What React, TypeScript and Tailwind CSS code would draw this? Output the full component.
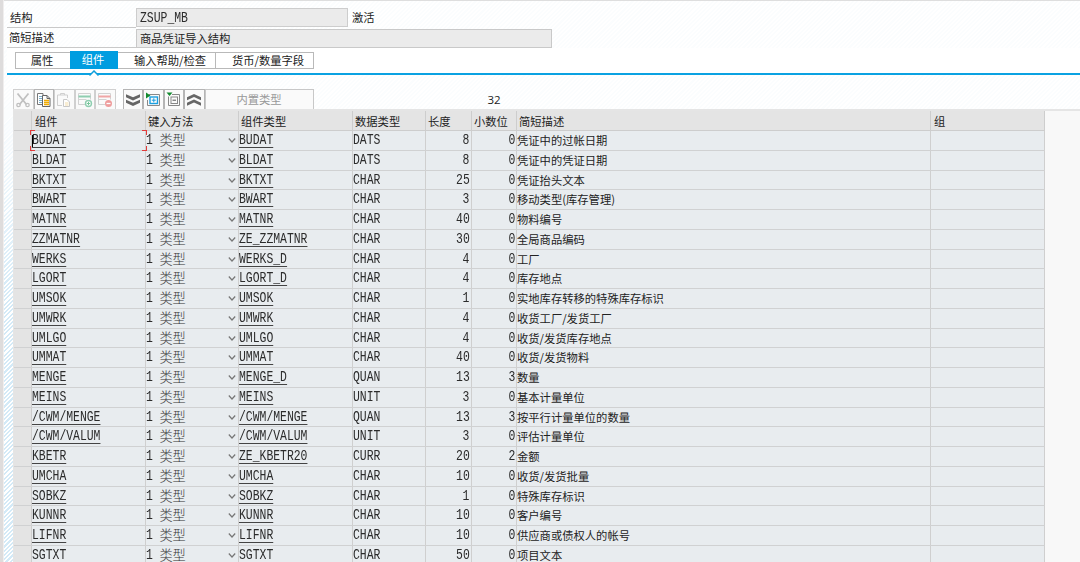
import type { ReactNode } from "react";

type Field = {
  name: string;
  type: string;
  dataType: string;
  length: number;
  decimals: number;
  text: string;
};

const fields: Field[] = [
  { name: "BUDAT", type: "BUDAT", dataType: "DATS", length: 8, decimals: 0, text: "凭证中的过帐日期" },
  { name: "BLDAT", type: "BLDAT", dataType: "DATS", length: 8, decimals: 0, text: "凭证中的凭证日期" },
  { name: "BKTXT", type: "BKTXT", dataType: "CHAR", length: 25, decimals: 0, text: "凭证抬头文本" },
  { name: "BWART", type: "BWART", dataType: "CHAR", length: 3, decimals: 0, text: "移动类型(库存管理)" },
  { name: "MATNR", type: "MATNR", dataType: "CHAR", length: 40, decimals: 0, text: "物料编号" },
  { name: "ZZMATNR", type: "ZE_ZZMATNR", dataType: "CHAR", length: 30, decimals: 0, text: "全局商品编码" },
  { name: "WERKS", type: "WERKS_D", dataType: "CHAR", length: 4, decimals: 0, text: "工厂" },
  { name: "LGORT", type: "LGORT_D", dataType: "CHAR", length: 4, decimals: 0, text: "库存地点" },
  { name: "UMSOK", type: "UMSOK", dataType: "CHAR", length: 1, decimals: 0, text: "实地库存转移的特殊库存标识" },
  { name: "UMWRK", type: "UMWRK", dataType: "CHAR", length: 4, decimals: 0, text: "收货工厂/发货工厂" },
  { name: "UMLGO", type: "UMLGO", dataType: "CHAR", length: 4, decimals: 0, text: "收货/发货库存地点" },
  { name: "UMMAT", type: "UMMAT", dataType: "CHAR", length: 40, decimals: 0, text: "收货/发货物料" },
  { name: "MENGE", type: "MENGE_D", dataType: "QUAN", length: 13, decimals: 3, text: "数量" },
  { name: "MEINS", type: "MEINS", dataType: "UNIT", length: 3, decimals: 0, text: "基本计量单位" },
  { name: "/CWM/MENGE", type: "/CWM/MENGE", dataType: "QUAN", length: 13, decimals: 3, text: "按平行计量单位的数量" },
  { name: "/CWM/VALUM", type: "/CWM/VALUM", dataType: "UNIT", length: 3, decimals: 0, text: "评估计量单位" },
  { name: "KBETR", type: "ZE_KBETR20", dataType: "CURR", length: 20, decimals: 2, text: "金额" },
  { name: "UMCHA", type: "UMCHA", dataType: "CHAR", length: 10, decimals: 0, text: "收货/发货批量" },
  { name: "SOBKZ", type: "SOBKZ", dataType: "CHAR", length: 1, decimals: 0, text: "特殊库存标识" },
  { name: "KUNNR", type: "KUNNR", dataType: "CHAR", length: 10, decimals: 0, text: "客户编号" },
  { name: "LIFNR", type: "LIFNR", dataType: "CHAR", length: 10, decimals: 0, text: "供应商或债权人的帐号" },
  { name: "SGTXT", type: "SGTXT", dataType: "CHAR", length: 50, decimals: 0, text: "项目文本" },
];

const columns = "grid grid-cols-[18px_114px_93px_114px_73px_46px_45px_414px_114px]";

// Narrow fixed-width text
function Mono({ children, right }: { children: ReactNode; right?: boolean }) {
  return (
    <span
      className={
        "inline-block scale-x-[0.815] whitespace-pre font-['Liberation_Mono',monospace] text-[14px] leading-[15px] text-[#2b2b2b] " +
        (right ? "origin-right" : "origin-left")
      }
    >
      {children}
    </span>
  );
}

function LinkText({ children }: { children: ReactNode }) {
  return (
    <Mono>
      <span className="block h-[15px] border-b border-[#444]">{children}</span>
    </Mono>
  );
}

function Head({ children, className = "" }: { children?: ReactNode; className?: string }) {
  return <div className={"border-r border-[#cdcdcd] whitespace-nowrap leading-[20px] " + className}>{children}</div>;
}

function Cell({ children, className = "" }: { children?: ReactNode; className?: string }) {
  return (
    <div className={"flex min-w-0 items-start border-r border-[#cfcfcf] whitespace-nowrap pt-[2px] " + className}>
      {children}
    </div>
  );
}

function ToolButton({ children, disabled }: { children: ReactNode; disabled?: boolean }) {
  return (
    <div
      className={
        "flex h-5 w-[20.5px] items-center justify-center border border-b-0 bg-[#fafafa] " +
        (disabled ? "border-[#d0d0d0]" : "border-[#b5b5b5]")
      }
    >
      <svg width="16" height="16" viewBox="0 0 16 16" fill="none">
        {children}
      </svg>
    </div>
  );
}

function Toolbar() {
  return (
    <div className="flex h-5 pl-[9px]">
      <ToolButton disabled>
        <path d="M2.500 1.500l9 11M13.500 1.500l-9 11" stroke="#c0c0c0" strokeWidth="1.800" />
        <circle cx="3.500" cy="13" r="1.700" stroke="#c0c0c0" strokeWidth="1.300" />
        <circle cx="12.500" cy="13" r="1.700" stroke="#c0c0c0" strokeWidth="1.300" />
      </ToolButton>
      <ToolButton>
        <path d="M1.500 1.500h5.500v11H1.500z" fill="#fff" stroke="#777" />
        <path d="M3 4.500h3M3 6.500h3M3 8.500h3M3 10.500h3" stroke="#7aaecb" />
        <path d="M6.500 3.500H11l3 3v8H6.500z" fill="#fff" stroke="#666" />
        <path d="M11 3.500v3h3" stroke="#666" />
        <path d="M8 8.500h5M8 10.500h5M8 12.500h5" stroke="#f0ab00" strokeWidth="1.300" />
      </ToolButton>
      <ToolButton disabled>
        <path d="M6 13.500H1.500V3h10v3M4.500 3V1.500h4V3" stroke="#cfcfcf" />
        <path d="M7.500 7.500H11l2.500 2.500v4.500h-6z" fill="#fff" stroke="#c8c8c8" />
        <path d="M9 11h3.500M9 13h3.500" stroke="#f3dca8" />
      </ToolButton>
      <ToolButton disabled>
        <path d="M1.500 1.500h12v6M1.500 1.500v11H8M1.500 7.500h8" stroke="#d2d2d2" />
        <path d="M1.500 4.500h12" stroke="#8fceb0" strokeWidth="2" />
        <circle cx="11.500" cy="11.500" r="3" fill="#fff" stroke="#8fceb0" strokeWidth="1.400" />
        <path d="M9.800 11.500h3.400M11.500 9.800v3.400" stroke="#79c59b" />
      </ToolButton>
      <ToolButton disabled>
        <path d="M1.500 1.500h12v6M1.500 1.500v11H8M1.500 7.500h8" stroke="#d2d2d2" />
        <path d="M1.500 4.500h12" stroke="#f0a6a6" strokeWidth="2" />
        <circle cx="11.500" cy="11.500" r="3.500" fill="#ee9c9c" />
        <path d="M9.500 11.500h4" stroke="#fff" strokeWidth="1.300" />
      </ToolButton>
      <div className="w-[7px]" />
      <ToolButton>
        <path d="M1 2.200l7 3 7-3v3L8 8.400 1 5.200zM1 7.700l7 3 7-3v3l-7 3.200-7-3.200z" fill="#666" />
      </ToolButton>
      <ToolButton>
        <path d="M4 2.500h10.500v11H2.500V8" stroke="#888" />
        <rect x="5" y="5" width="7.500" height="6.500" stroke="#1a9fe0" strokeWidth="1.400" />
        <path d="M6.800 8.200h4M8.800 6.300v4" stroke="#1a9fe0" />
        <path d="M1 0.500l4.500 3L1 6.500z" fill="#128a2e" />
      </ToolButton>
      <ToolButton>
        <path d="M6 2.500h7.500v11h-11v-9" stroke="#888" />
        <rect x="5" y="5" width="6.500" height="6.500" stroke="#888" />
        <path d="M6.500 8.200h3.500" stroke="#555" />
        <path d="M0.500 0.500h6L3.500 4z" fill="#128a2e" />
      </ToolButton>
      <ToolButton>
        <path d="M1 8.300l7-3.200 7 3.200v-3L8 2 1 5.300zM1 13.800l7-3.200 7 3.200v-3L8 7.500l-7 3.300z" fill="#666" />
      </ToolButton>
      <div className="h-5 w-[109px] border border-b-0 border-[#c8c8c8] bg-[#fafafa] text-center leading-[19px] text-[#999]">
        内置类型
      </div>
      <div className="ml-[174px] pt-[2px] font-['Open_Sans',sans-serif] text-[11.500px] leading-[18px] text-[#222]">32</div>
    </div>
  );
}

function Row({ field, active }: { field: Field; active: boolean }) {
  return (
    <div className={columns + " h-[19.75px] w-[1031px] border-b border-[#d0d1d2] bg-[#e8ecef]"}>
      <div className="border-r border-[#cdcdcd] bg-[#e4e4e4]" />
      <Cell className="relative">
        <LinkText>{field.name}</LinkText>
        {active && (
          <div className="absolute -top-px -left-[2px] h-[21px] w-[117px]">
            <span className="absolute top-0 left-0 size-[5px] border-t border-l border-[#e23b3b]" />
            <span className="absolute top-0 right-0 size-[5px] border-t border-r border-[#e23b3b]" />
            <span className="absolute bottom-0 left-0 size-[5px] border-b border-l border-[#e23b3b]" />
            <span className="absolute right-0 bottom-0 size-[5px] border-r border-b border-[#e23b3b]" />
            <span className="absolute top-[5px] left-[2px] h-3 w-px bg-black" />
          </div>
        )}
      </Cell>
      <Cell>
        <Mono>1</Mono>
        <span className="-mt-px ml-[5px] font-['Noto_Sans_CJK_SC',sans-serif] text-[13.2px] leading-[15px] font-light text-[#333]">
          类型
        </span>
        <svg className="mt-[4px] mr-[2px] ml-auto" width="8" height="7" viewBox="0 0 8 7" fill="none">
          <path d="M0.800 1.500L4 5l3.200-3.500" stroke="#777" strokeWidth="1.200" />
        </svg>
      </Cell>
      <Cell>
        <LinkText>{field.type}</LinkText>
      </Cell>
      <Cell>
        <Mono>{field.dataType}</Mono>
      </Cell>
      <Cell className="justify-end pr-[1.500px]">
        <Mono right>{field.length}</Mono>
      </Cell>
      <Cell className="justify-end pr-[0.500px]">
        <Mono right>{field.decimals}</Mono>
      </Cell>
      <Cell className="leading-[15px]">{field.text}</Cell>
      <Cell />
    </div>
  );
}

export default function App() {
  return (
    <div className="flex h-[562px] w-[1080px] overflow-hidden bg-white font-['Noto_Sans_CJK_SC',sans-serif] text-[11.3px] text-[#222]">
      <div className="w-1 shrink-0 border-r border-[#f0eeee] bg-[#dedcdc]" />
      <div className="flex min-w-0 flex-1 flex-col border-t border-[#dedede] bg-[repeating-linear-gradient(135deg,#fbfdfe_0px,#fbfdfe_1.5px,#ffffff_1.5px,#ffffff_3px)]">
        {/* Structure header */}
        <div className="mt-[7px] flex h-[20px] pl-[3px]">
          <div className="w-[129px] border-b border-[#c9c9c9] pl-[3px] leading-[19px]">结构</div>
          <div className="h-[19px] w-[212px] border border-[#cdcdcd] bg-[#ebebeb] pl-[3px]">
            <Mono>ZSUP_MB</Mono>
          </div>
          <div className="pl-[4px] leading-[19px]">激活</div>
        </div>
        <div className="flex h-[20px] pl-[3px]">
          <div className="w-[129px] border-b border-[#c9c9c9] pl-[2px] leading-[19px]">简短描述</div>
          <div className="mt-[1px] h-[19px] w-[416px] border border-[#c9c9c9] bg-[#ebebeb] pl-[3px] leading-[16px]">
            商品凭证导入结构
          </div>
        </div>

        {/* Tabs */}
        <div className="ml-[3px] h-[27px] border-b-2 border-[#0aa2e2] bg-white pt-[3px] pl-[8px]">
          <div className="flex h-[18px] items-center text-center leading-[14px]">
            <div className="h-[17px] w-[55px] border border-r-0 border-[#b9b9b9] pr-[2px]">属性</div>
            <div className="relative h-[18px] w-[48px] bg-[#009de0] pr-[2px] leading-[17px] text-white">
              组件
              <svg className="absolute top-[19px] left-[19px]" width="10" height="6" viewBox="0 0 10 6">
                <path d="M0.500 5.500L5 1l4.500 4.500" fill="#fff" stroke="#0f9fdc" strokeWidth="1.500" />
              </svg>
            </div>
            <div className="h-[17px] w-[98px] border border-l-0 border-[#b9b9b9] pl-[7px]">输入帮助/检查</div>
            <div className="h-[17px] w-[98px] border border-l-0 border-[#b9b9b9] pl-[7px]">货币/数量字段</div>
          </div>
        </div>

        {/* Component table */}
        <div className="flex min-h-0 flex-1">
          <div className="w-[9px] bg-[repeating-linear-gradient(135deg,#d4eaf7_0px,#d4eaf7_1.500px,#ffffff_1.500px,#ffffff_3px)] mask-[linear-gradient(to_bottom,transparent_20px,black_230px)]" />
          <div className="flex min-w-0 flex-1 flex-col">
            <div className="-ml-[9px] pt-[14px]">
              <Toolbar />
            </div>
            <div className="flex-1 overflow-hidden border-t-2 border-l border-[#e5e5e5] bg-[#f8f8f8]">
              <div className={columns + " h-5 w-[1031px] border-b border-[#cdcdcd] bg-[#e4e4e4]"}>
                <Head />
                <Head className="pl-[3px]">组件</Head>
                <Head className="pl-[2px]">键入方法</Head>
                <Head className="pl-[2px]">组件类型</Head>
                <Head className="pl-[2px]">数据类型</Head>
                <Head className="pl-[2px]">长度</Head>
                <Head className="pl-[2px]">小数位</Head>
                <Head className="pl-[2px]">简短描述</Head>
                <Head className="pl-[3px]">组</Head>
              </div>
              {fields.map((field, i) => (
                <Row key={field.name} field={field} active={i === 0} />
              ))}
            </div>
          </div>
        </div>
      </div>
    </div>
  );
}
